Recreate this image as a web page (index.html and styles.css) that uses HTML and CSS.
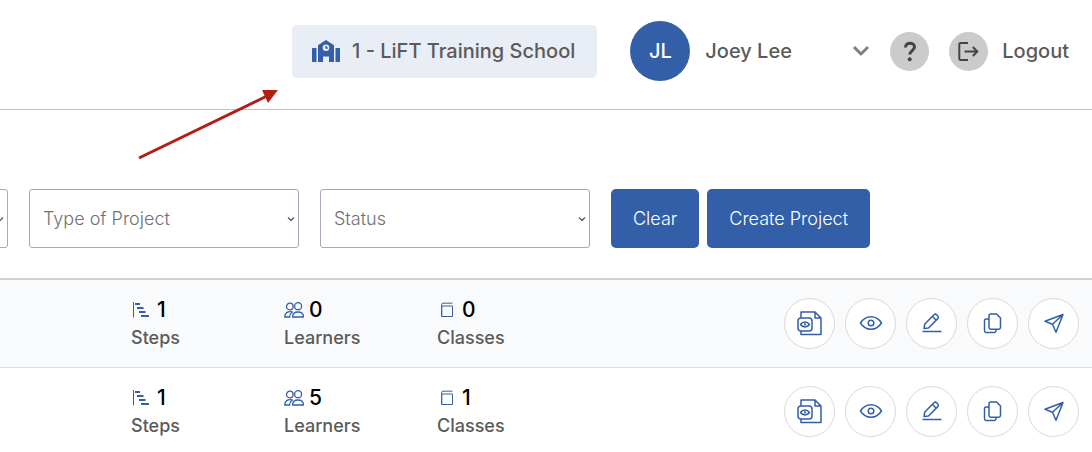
FILE: index.html
```html
<!DOCTYPE html>
<html lang="en">
<head>
    <meta charset="UTF-8">
    <meta name="viewport" content="width=device-width, initial-scale=1.0">
    <title>Projects</title>
    <link rel="stylesheet" href="styles.css">
</head>
<body>
    <!-- shared icons -->
    <svg class="sprite" aria-hidden="true">
        <symbol id="icon-steps" viewBox="0 0 16 16">
            <path d="M.5 0v15.500" stroke-width="1"/>
            <path d="M2 2h5M4 6h6.500M6 10h6.500M8 14h8" stroke-width="2"/>
        </symbol>
        <symbol id="icon-learners" viewBox="0 0 20 16">
            <circle cx="5.800" cy="4.500" r="3.300"/>
            <circle cx="14.100" cy="4.200" r="3.500"/>
            <path d="M8.600 15c0-3.200 2.200-5 5.400-5s5.400 1.800 5.400 5zM8.300 9.900C3.500 9 .7 11 .7 15h5c0-2.200.8-3.700 2.600-5.100z"/>
        </symbol>
        <symbol id="icon-classes" viewBox="0 0 14 16">
            <path d="M1.700 14.500V2.500c0-.8.500-1.300 1.300-1.300h9.500M1.700 4h10.800v10.500H1.700z"/>
        </symbol>
        <symbol id="icon-report" viewBox="0 0 26 26">
            <path d="M4 8V2h14l6 6v16.500H4V21M18 2v6H24"/>
            <rect x="1" y="8" width="14" height="13" rx="3"/>
            <path d="M3.500 14.500c2.200-3.300 6.800-3.300 9 0-2.200 3.300-6.800 3.300-9 0z"/>
            <circle cx="8" cy="14.500" r=".4"/>
        </symbol>
        <symbol id="icon-view" viewBox="0 0 26 26">
            <path d="M2.500 13C5 9 9 6.800 13 6.800S21 9 23.500 13C21 17 17 19.200 13 19.200S5 17 2.500 13z"/>
            <circle cx="13" cy="13" r="2.800"/>
        </symbol>
        <symbol id="icon-edit" viewBox="0 0 26 26">
            <path d="M5 18.500l.8-4.500L15 4.800c.8-.8 1.800-.8 2.600 0l1.200 1.200c.8.800.8 1.800 0 2.600L9.500 18zM13.500 6.500l3.700 3.700M3.500 21.500h19"/>
        </symbol>
        <symbol id="icon-copy" viewBox="0 0 26 26">
            <path d="M11 4h5.500l4 4v9.500c0 1-.7 1.700-1.700 1.700H10.700c-1 0-1.700-.7-1.700-1.700V5.700C9 4.700 10 4 11 4z"/>
            <path d="M9 9H6.200c-1 0-1.700.7-1.700 1.700v10.100c0 1 .7 1.700 1.700 1.700h8.100c1 0 1.700-.7 1.700-1.700v-1.600"/>
        </symbol>
        <symbol id="icon-send" viewBox="0 0 26 26">
            <path d="M22 4.500L4 11.300l7.500 3L15 22.300zM22 4.500L11.500 14.300"/>
        </symbol>
        <symbol id="icon-caret" viewBox="0 0 8 8">
            <path d="M1 2.500l3 3 3-3"/>
        </symbol>
    </svg>

    <header class="topbar">
        <div class="school">
            <svg class="school-icon" viewBox="0 0 28 22" aria-hidden="true">
                <path d="M0 9c0-.6.4-1 1-1h3.500v14H1c-.6 0-1-.4-1-1zM28 9c0-.6-.4-1-1-1h-3.500v14H27c.6 0 1-.4 1-1zM6 5.300L14 0l8 5.300V22h-5v-5.500h-6V22H6z"/>
                <circle cx="14" cy="7.700" r="3.300"/>
                <path class="clock" d="M14 5.700V8h1.800"/>
            </svg>
            <span>1 - LiFT Training School</span>
        </div>
        <button class="user" type="button">
            <span class="avatar">JL</span>
            <span class="user-name">Joey Lee</span>
            <svg class="user-caret" viewBox="0 0 18 12" aria-hidden="true"><path d="M2 2l7 7 7-7"/></svg>
        </button>
        <button class="round help" type="button" aria-label="Help">
            <svg viewBox="0 0 39 39" aria-hidden="true">
                <path d="M15.500 15.500c0-6 9-5.500 9-.5 0 3.500-4.700 3.700-4.700 7.500"/>
                <circle cx="19.700" cy="27.300" r="2"/>
            </svg>
        </button>
        <a class="logout" href="#">
            <span class="round">
                <svg viewBox="0 0 39 39" aria-hidden="true">
                    <path d="M19 11h-7.500c-.8 0-1.200.4-1.200 1.200v14.600c0 .8.400 1.200 1.200 1.200H19M15.500 19.500h12.500M23.800 15l4.500 4.500-4.500 4.500"/>
                </svg>
            </span>
            <span>Logout</span>
        </a>
    </header>

    <main>
        <form class="filters">
            <div class="filter">
                <select aria-label="School year">
                    <option></option>
                </select>
                <svg class="caret"><use href="#icon-caret"/></svg>
            </div>
            <div class="filter">
                <select aria-label="Type of Project">
                    <option>Type of Project</option>
                </select>
                <svg class="caret"><use href="#icon-caret"/></svg>
            </div>
            <div class="filter">
                <select aria-label="Status">
                    <option>Status</option>
                </select>
                <svg class="caret"><use href="#icon-caret"/></svg>
            </div>
            <div class="filter-buttons">
                <button class="btn" type="reset">Clear</button>
                <button class="btn" type="button">Create Project</button>
            </div>
        </form>

        <table class="projects">
            <tr>
                <td class="stat">
                    <div class="count"><svg class="i-steps"><use href="#icon-steps"/></svg>1</div>
                    <div class="label">Steps</div>
                </td>
                <td class="stat">
                    <div class="count"><svg class="i-learners"><use href="#icon-learners"/></svg>0</div>
                    <div class="label">Learners</div>
                </td>
                <td class="stat">
                    <div class="count"><svg class="i-classes"><use href="#icon-classes"/></svg>0</div>
                    <div class="label">Classes</div>
                </td>
                <td>
                    <div class="actions">
                        <button type="button" aria-label="Report"><svg><use href="#icon-report"/></svg></button>
                        <button type="button" aria-label="View"><svg><use href="#icon-view"/></svg></button>
                        <button type="button" aria-label="Edit"><svg><use href="#icon-edit"/></svg></button>
                        <button type="button" aria-label="Copy"><svg><use href="#icon-copy"/></svg></button>
                        <button type="button" aria-label="Send"><svg><use href="#icon-send"/></svg></button>
                    </div>
                </td>
            </tr>
            <tr>
                <td class="stat">
                    <div class="count"><svg class="i-steps"><use href="#icon-steps"/></svg>1</div>
                    <div class="label">Steps</div>
                </td>
                <td class="stat">
                    <div class="count"><svg class="i-learners"><use href="#icon-learners"/></svg>5</div>
                    <div class="label">Learners</div>
                </td>
                <td class="stat">
                    <div class="count"><svg class="i-classes"><use href="#icon-classes"/></svg>1</div>
                    <div class="label">Classes</div>
                </td>
                <td>
                    <div class="actions">
                        <button type="button" aria-label="Report"><svg><use href="#icon-report"/></svg></button>
                        <button type="button" aria-label="View"><svg><use href="#icon-view"/></svg></button>
                        <button type="button" aria-label="Edit"><svg><use href="#icon-edit"/></svg></button>
                        <button type="button" aria-label="Copy"><svg><use href="#icon-copy"/></svg></button>
                        <button type="button" aria-label="Send"><svg><use href="#icon-send"/></svg></button>
                    </div>
                </td>
            </tr>
        </table>
    </main>

    <!-- arrow pointing at the school name -->
    <svg class="pointer" viewBox="0 0 142 72" aria-hidden="true">
        <path class="pointer-line" d="M2 70L130 8"/>
        <path class="pointer-head" d="M141 2h-16l6 13z"/>
    </svg>
</body>
</html>
```

FILE: styles.css
```css
*{
    box-sizing: border-box;
}
body{
    margin: 0;
    background-color: white;
    color: #5a5a5a;
    font-family: Inter, "Liberation Sans", sans-serif;
    font-size: 18px;
    overflow-x: hidden;
}
button, select{
    font: inherit;
    color: inherit;
}
svg{
    display: block;
    flex: none;
    fill: none;
    stroke: #335fa8;
    stroke-linejoin: round;
}
.sprite{
    position: absolute;
    width: 0;
    height: 0;
}

/* top bar */
.topbar{
    display: flex;
    align-items: center;
    justify-content: flex-end;
    padding: 21px 23px 28px;
    border-bottom: 1px solid #bfbfbf;
    font-size: 20px;
    font-weight: 500;
    line-height: 24px;
    white-space: nowrap;
}
.school{
    display: flex;
    align-items: center;
    gap: 12px;
    height: 53px;
    margin-right: 33px;
    padding: 0 22px 0 20px;
    background-color: #e9edf6;
    border-radius: 5px;
}
.school-icon{
    width: 28px;
    height: 22px;
    fill: #335fa8;
    stroke: none;
}
.school-icon circle{
    fill: #e9edf6;
}
.school-icon .clock{
    fill: none;
    stroke: #335fa8;
    stroke-width: 1.3;
}
.user{
    display: flex;
    align-items: center;
    width: 240px;
    margin-right: 20px;
    padding: 0;
    background: none;
    border: 0;
}
.avatar{
    width: 60px;
    height: 60px;
    margin-right: 15px;
    border-radius: 50%;
    background-color: #335fa8;
    color: white;
    line-height: 60px;
    text-align: center;
}
.user-caret{
    width: 18px;
    height: 12px;
    margin-left: auto;
    stroke: #808080;
    stroke-width: 3;
}
.round{
    width: 39px;
    height: 39px;
    padding: 0;
    border: 0;
    border-radius: 50%;
    background-color: #cbcbcb;
}
.round svg{
    width: 39px;
    height: 39px;
    stroke: #444;
    stroke-width: 2;
}
.help{
    margin-right: 20px;
}
.help svg{
    stroke-width: 3;
}
.help circle{
    fill: #444;
    stroke: none;
}
.logout{
    display: flex;
    align-items: center;
    gap: 14px;
    color: inherit;
    text-decoration: none;
}

/* filters, the row starts left of the window */
.filters{
    display: flex;
    gap: 21px;
    margin-left: -262px;
    padding: 79px 0 30px;
    font-weight: 300;
}
.filter{
    position: relative;
    flex: none;
    width: 270px;
}
.filter select{
    appearance: none;
    display: block;
    width: 100%;
    height: 59px;
    padding: 0 13px;
    background-color: white;
    border: 1px solid #a9a6ba;
    border-radius: 3px;
    color: #707070;
}
.caret{
    position: absolute;
    top: 26px;
    right: 4px;
    width: 8px;
    height: 8px;
    stroke: #555;
    stroke-width: 1.2;
    pointer-events: none;
}
.filter-buttons{
    display: flex;
    gap: 8px;
}
.btn{
    height: 59px;
    padding: 0 22px;
    border: 0;
    border-radius: 5px;
    background-color: #335fa8;
    color: white;
    white-space: nowrap;
}

/* project list */
.projects{
    width: 100%;
    border-collapse: collapse;
    border-top: 2px solid #cfcfd2;
}
.projects tr{
    height: 88px;
    border-bottom: 1px solid #d9dbe0;
}
.projects tr:nth-child(odd){
    background-color: #f9fafc;
}
.projects td{
    padding: 0;
}
.projects .stat{
    width: 153px;
    padding-top: 2px;
}
.projects .stat:first-child{
    width: 284px;
    padding-left: 131px;
}
.count{
    display: flex;
    align-items: center;
    color: black;
    font-size: 21px;
    font-weight: 500;
    line-height: 28px;
}
.label{
    font-weight: 500;
    line-height: 28px;
}
.i-steps{
    width: 16px;
    height: 16px;
    margin: 0 8px 0 2px;
}
.i-learners{
    width: 20px;
    height: 16px;
    margin-right: 5px;
    stroke-width: 1.3;
}
.i-classes{
    width: 14px;
    height: 16px;
    margin: 0 8px 0 3px;
}
.actions{
    display: flex;
    justify-content: flex-end;
    gap: 10px;
    padding-right: 13px;
}
.actions button{
    display: grid;
    place-items: center;
    width: 51px;
    height: 51px;
    padding: 0;
    background-color: white;
    border: 1px solid #dcd8d8;
    border-radius: 50%;
}
.actions svg{
    width: 26px;
    height: 26px;
    stroke-width: 1.5;
}

/* arrow drawn over the page */
.pointer{
    position: absolute;
    top: 88px;
    left: 137px;
    width: 142px;
    height: 72px;
}
.pointer-line{
    stroke: #b11e12;
    stroke-width: 3;
}
.pointer-head{
    fill: #b11e12;
    stroke: none;
}
```
